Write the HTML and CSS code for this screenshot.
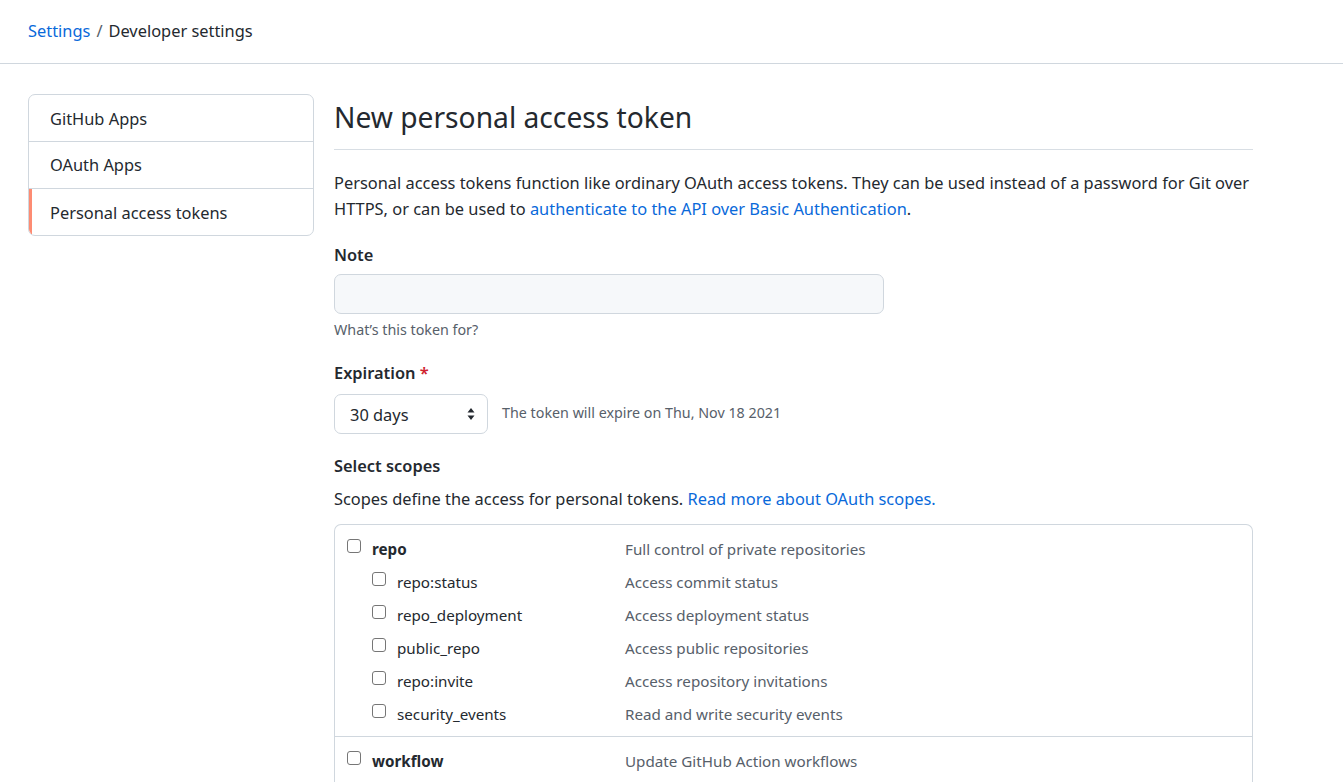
FILE: index.html
```html
<!DOCTYPE html>
<html lang="en">
<head>
<meta charset="utf-8">
<title>New personal access token</title>
<link rel="stylesheet" href="styles.css">
</head>
<body>
<header class="page-header">
  <nav class="breadcrumb"><a href="#" class="link">Settings</a><span class="sep">/</span><span>Developer settings</span></nav>
</header>
<div class="layout">
  <aside class="sidebar">
    <a href="#" class="menu-item">GitHub Apps</a>
    <a href="#" class="menu-item">OAuth Apps</a>
    <a href="#" class="menu-item selected">Personal access tokens</a>
  </aside>
  <main class="main">
    <h1 class="subhead">New personal access token</h1>
    <p class="intro">Personal access tokens function like ordinary OAuth access tokens. They can be used instead of a password for Git over HTTPS, or can be used to <a href="#" class="link">authenticate to the API over Basic Authentication</a>.</p>

    <div class="form-group">
      <label class="label">Note</label>
      <div class="input"></div>
      <div class="note">What’s this token for?</div>
    </div>

    <div class="form-group">
      <label class="label">Expiration <span class="req">*</span></label>
      <div class="exp-row">
        <div class="select"><span>30 days</span>
          <svg class="updown" width="8" height="14" viewBox="0 0 8 14"><path d="M4 1 L7.5 5.5 H0.5 Z M4 13 L7.5 8.5 H0.5 Z" fill="#24292f"/></svg>
        </div>
        <span class="exp-note">The token will expire on Thu, Nov 18 2021</span>
      </div>
    </div>

    <div class="scopes-head">
      <div class="label">Select scopes</div>
      <p class="scopes-desc">Scopes define the access for personal tokens. <a href="#" class="link">Read more about OAuth scopes.</a></p>
    </div>

    <div class="scopes">
      <div class="group">
        <div class="row"><label class="name"><input type="checkbox"><b>repo</b></label><span class="desc">Full control of private repositories</span></div>
        <div class="row sub"><label class="name"><input type="checkbox">repo:status</label><span class="desc">Access commit status</span></div>
        <div class="row sub"><label class="name"><input type="checkbox">repo_deployment</label><span class="desc">Access deployment status</span></div>
        <div class="row sub"><label class="name"><input type="checkbox">public_repo</label><span class="desc">Access public repositories</span></div>
        <div class="row sub"><label class="name"><input type="checkbox">repo:invite</label><span class="desc">Access repository invitations</span></div>
        <div class="row sub"><label class="name"><input type="checkbox">security_events</label><span class="desc">Read and write security events</span></div>
      </div>
      <div class="group">
        <div class="row"><label class="name"><input type="checkbox"><b>workflow</b></label><span class="desc">Update GitHub Action workflows</span></div>
      </div>
    </div>
  </main>
</div>
</body>
</html>
```
FILE: styles.css
```css
* { box-sizing: border-box; }
html, body { margin: 0; padding: 0; background: #fff; }
body {
  font-family: "Noto Sans", "Open Sans", sans-serif;
  font-size: 16.4px;
  line-height: 26px;
  color: #24292f;
}
a { text-decoration: none; }
.link { color: #0969da; }

.page-header {
  height: 64px;
  border-bottom: 1px solid #d0d7de;
  padding: 0 28px 2px;
  display: flex;
  align-items: center;
}
.breadcrumb { display: flex; align-items: center; }
.breadcrumb .sep { color: #57606a; margin: 0 6px; }

.layout {
  display: flex;
  gap: 20px;
  padding: 30px 0 0 28px;
  width: 1253px;
}
.sidebar {
  width: 286px;
  flex: none;
  align-self: flex-start;
  border: 1px solid #d0d7de;
  border-radius: 7px;
  overflow: hidden;
}
.menu-item {
  display: block;
  height: 47px;
  line-height: 46px;
  padding-left: 21px;
  color: #24292f;
  border-top: 1px solid #d0d7de;
  position: relative;
}
.menu-item:first-child { border-top: none; height: 46px; line-height: 47px; }
.menu-item.selected { line-height: 47px; }
.menu-item.selected::before {
  content: "";
  position: absolute;
  left: 0; top: 0; bottom: 0;
  width: 3px;
  background: #fd8c73;
}

.main { flex: 1; min-width: 0; }
.subhead {
  margin: 0 0 20px 0;
  font-size: 28.2px;
  font-weight: 400;
  line-height: 45px;
  padding: 1px 0 9px;
  border-bottom: 1px solid #d8dee4;
}
.intro { margin: 0 0 20px 0; }

.form-group { margin-bottom: 19px; }
.label { display: block; font-weight: 600; margin-bottom: 6px; }
.req { color: #cf222e; }
.input {
  width: 550px;
  height: 40px;
  background: #f6f8fa;
  border: 1px solid #d0d7de;
  border-radius: 7px;
}
.note {
  margin-top: 5px;
  font-size: 14.3px;
  line-height: 22px;
  color: #57606a;
}
.exp-row { display: flex; align-items: center; gap: 14px; margin-top: 8px; }
.select {
  width: 154px;
  height: 40px;
  border: 1px solid #d0d7de;
  border-radius: 7px;
  display: flex;
  align-items: center;
  justify-content: space-between;
  padding: 0 12px 0 15px;
}
.select span { padding-top: 1px; }
.exp-note { font-size: 14.3px; color: #57606a; padding-bottom: 3px; }

.scopes-head .label { margin-bottom: 7px; }
.scopes-desc { margin: 0 0 12px 0; }

.scopes {
  border: 1px solid #d0d7de;
  border-radius: 7px 7px 0 0;
  border-bottom: none;
  font-size: 15.2px;
}
.group { padding: 7px 0 6px 12px; }
.group + .group { border-top: 1px solid #d0d7de; }
.row {
  display: grid;
  grid-template-columns: 278px 1fr;
  height: 33px;
  align-items: center;
}
.name { display: flex; align-items: center; }
.name input {
  appearance: none;
  -webkit-appearance: none;
  margin: -5px 11px 0 0;
  width: 14px;
  height: 14px;
  border: 1px solid #767676;
  border-radius: 3px;
  background: #fff;
  flex: none;
}
.row.sub .name { padding-left: 25px; }
.desc { color: #57606a; }
```
